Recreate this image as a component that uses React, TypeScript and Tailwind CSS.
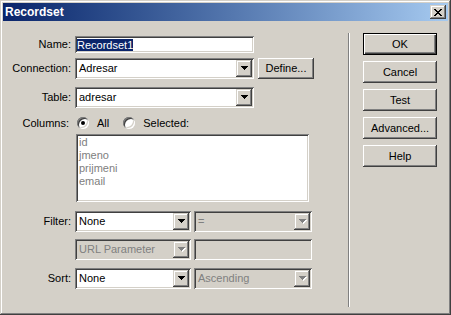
import clsx from "clsx";

const raised =
  "shadow-[inset_-1px_-1px_#404040,inset_1px_1px_#ffffff,inset_-2px_-2px_#808080]";
const sunken =
  "shadow-[inset_1px_1px_#808080,inset_-1px_-1px_#ffffff,inset_2px_2px_#404040,inset_-2px_-2px_#d4d0c8]";
const comboBtn =
  "shadow-[inset_-1px_-1px_#404040,inset_1px_1px_#d4d0c8,inset_-2px_-2px_#808080,inset_2px_2px_#ffffff]";

function Arrow({ disabled }: { disabled?: boolean }) {
  const fill = disabled ? "#808080" : "#000000";
  return (
    <svg width="8" height="5" viewBox="0 0 8 5" shapeRendering="crispEdges">
      {disabled && (
        <g fill="#ffffff">
          <rect x="1" y="1" width="7" height="1" />
          <rect x="2" y="2" width="5" height="1" />
          <rect x="3" y="3" width="3" height="1" />
          <rect x="4" y="4" width="1" height="1" />
        </g>
      )}
      <g fill={fill}>
        <rect x="0" y="0" width="7" height="1" />
        <rect x="1" y="1" width="5" height="1" />
        <rect x="2" y="2" width="3" height="1" />
        <rect x="3" y="3" width="1" height="1" />
      </g>
    </svg>
  );
}

function Select({
  value,
  className,
  disabled,
}: {
  value: string;
  className: string;
  disabled?: boolean;
}) {
  return (
    <div
      className={clsx(
        "h-[21px] flex p-[2px]",
        sunken,
        disabled ? "bg-[#d4d0c8] text-[#808080]" : "bg-white text-black",
        className
      )}
    >
      <div className="flex-1 flex items-center pl-[2px] whitespace-nowrap overflow-hidden">
        {value}
      </div>
      <div
        className={clsx(
          "w-[16px] flex items-center justify-center bg-[#d4d0c8] pl-[1px]",
          comboBtn
        )}
      >
        <Arrow disabled={disabled} />
      </div>
    </div>
  );
}

function Label({ text }: { text: string }) {
  return <div className="w-[68px] mr-[4px] text-right whitespace-nowrap">{text}</div>;
}

function Radio({ checked }: { checked?: boolean }) {
  return (
    <div
      className={clsx(
        "w-[12px] h-[12px] rounded-full bg-white flex items-center justify-center",
        "shadow-[inset_1px_1px_#808080,inset_-1px_-1px_#ffffff,inset_2px_2px_#404040,inset_-2px_-2px_#d4d0c8]"
      )}
    >
      {checked && <div className="w-[4px] h-[4px] rounded-full bg-black" />}
    </div>
  );
}

function Button({
  label,
  isDefault,
  className,
}: {
  label: string;
  isDefault?: boolean;
  className?: string;
}) {
  return (
    <div
      className={clsx(
        "flex items-center justify-center bg-[#d4d0c8] whitespace-nowrap",
        isDefault
          ? "shadow-[inset_0_0_0_1px_#000000,inset_2px_2px_#ffffff,inset_-2px_-2px_#404040,inset_-3px_-3px_#808080]"
          : raised,
        className
      )}
    >
      {label}
    </div>
  );
}

export default function App() {
  const columns = ["id", "jmeno", "prijmeni", "email"];

  return (
    <div className="w-[451px] h-[315px] bg-[#d4d0c8] p-[3px] flex flex-col font-['Liberation_Sans',Arial,sans-serif] text-[11px] text-black shadow-[inset_-1px_-1px_#404040,inset_1px_1px_#d4d0c8,inset_-2px_-2px_#808080,inset_2px_2px_#ffffff]">
      {/* Title bar */}
      <div className="h-[18px] flex items-center justify-between pl-[2px] pr-[2px] bg-gradient-to-r from-[#0a246a] to-[#a6caf0]">
        <span className="text-white font-bold text-[12px] leading-none">Recordset</span>
        <div className={clsx("w-[16px] h-[14px] bg-[#d4d0c8] flex items-center justify-center", comboBtn)}>
          <svg width="8" height="7" viewBox="0 0 8 7" shapeRendering="crispEdges">
            <g fill="#000000">
              <rect x="0" y="0" width="2" height="1" />
              <rect x="6" y="0" width="2" height="1" />
              <rect x="1" y="1" width="2" height="1" />
              <rect x="5" y="1" width="2" height="1" />
              <rect x="2" y="2" width="4" height="1" />
              <rect x="3" y="3" width="2" height="1" />
              <rect x="2" y="4" width="4" height="1" />
              <rect x="1" y="5" width="2" height="1" />
              <rect x="5" y="5" width="2" height="1" />
              <rect x="0" y="6" width="2" height="1" />
              <rect x="6" y="6" width="2" height="1" />
            </g>
          </svg>
        </div>
      </div>

      {/* Body */}
      <div className="flex-1 flex">
        <div className="w-[345px] flex flex-col">
          <div className="mt-[15px] h-[17px] flex items-center">
            <Label text="Name:" />
            <div className={clsx("w-[179px] h-[17px] bg-white flex items-center pl-[2px]", sunken)}>
              <span className="bg-[#0a246a] text-white leading-[12px]">Recordset1</span>
            </div>
          </div>

          <div className="mt-[5px] h-[21px] flex items-center">
            <Label text="Connection:" />
            <Select value="Adresar" className="w-[179px]" />
            <Button label="Define..." className="ml-[4px] w-[56px] h-[21px]" />
          </div>

          <div className="mt-[8px] h-[21px] flex items-center">
            <Label text="Table:" />
            <Select value="adresar" className="w-[179px]" />
          </div>

          <div className="mt-[8px] h-[14px] flex items-center">
            <div className="w-[66px] text-right">Columns:</div>
            <div className="ml-[8px]">
              <Radio checked />
            </div>
            <span className="ml-[8px]">All</span>
            <div className="ml-[14px]">
              <Radio />
            </div>
            <span className="ml-[8px]">Selected:</span>
          </div>

          <div className={clsx("mt-[4px] ml-[73px] w-[233px] h-[68px] bg-white pt-[2px] pl-[3px] text-[#808080] leading-[13px]", sunken)}>
            {columns.map((c) => (
              <div key={c}>{c}</div>
            ))}
          </div>

          <div className="mt-[9px] h-[21px] flex items-center">
            <Label text="Filter:" />
            <Select value="None" className="w-[116px]" />
            <Select value="=" className="ml-[3px] w-[118px]" disabled />
          </div>

          <div className="mt-[7px] h-[21px] flex items-center">
            <Label text="" />
            <Select value="URL Parameter" className="w-[116px]" disabled />
            <div className={clsx("ml-[3px] w-[118px] h-[21px] bg-[#d4d0c8]", sunken)} />
          </div>

          <div className="mt-[8px] h-[21px] flex items-center">
            <Label text="Sort:" />
            <Select value="None" className="w-[116px]" />
            <Select value="Ascending" className="ml-[3px] w-[118px]" disabled />
          </div>
        </div>

        {/* Separator */}
        <div className="mt-[12px] h-[274px] w-[2px] border-l border-r border-l-[#808080] border-r-white" />

        {/* Buttons */}
        <div className="ml-[13px] mt-[12px] w-[74px] flex flex-col gap-[6px]">
          <Button label="OK" isDefault className="h-[22px]" />
          <Button label="Cancel" className="h-[22px]" />
          <Button label="Test" className="h-[22px]" />
          <Button label="Advanced..." className="h-[22px]" />
          <Button label="Help" className="h-[22px]" />
        </div>
      </div>
    </div>
  );
}
